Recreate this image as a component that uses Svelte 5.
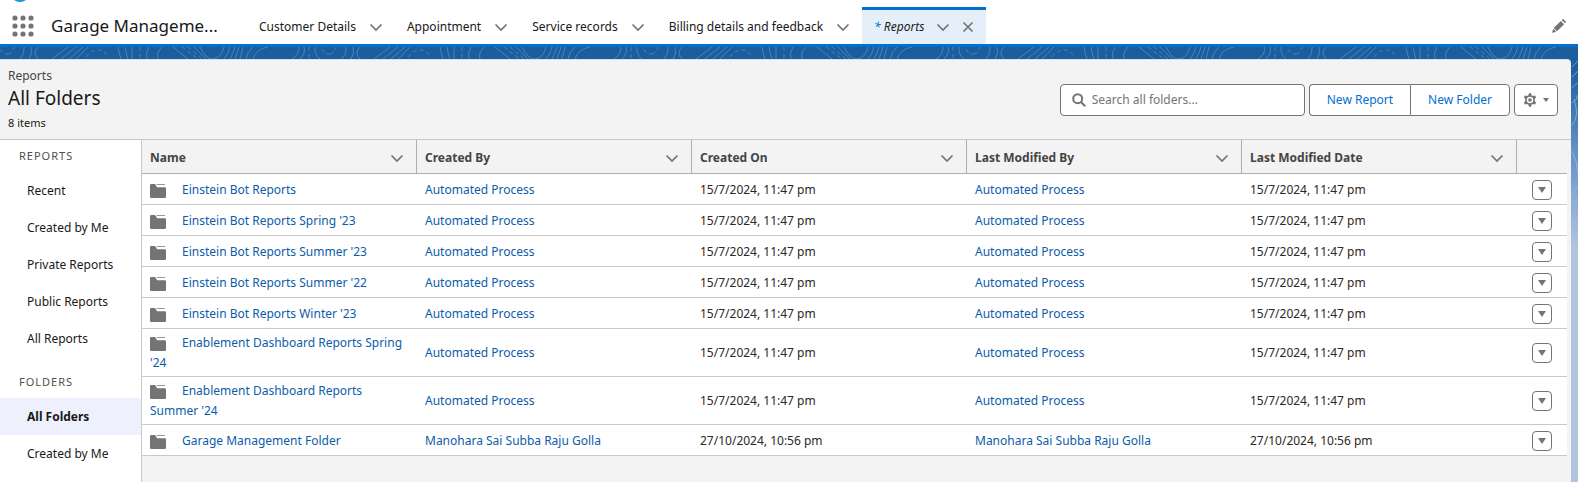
<script>
  const navItems = ['Customer Details', 'Appointment', 'Service records', 'Billing details and feedback'];
  const reportViews = ['Recent', 'Created by Me', 'Private Reports', 'Public Reports', 'All Reports'];
  const folderViews = ['All Folders', 'Created by Me'];
  const columns = ['Name', 'Created By', 'Created On', 'Last Modified By', 'Last Modified Date'];
  const rows = [
    "Einstein Bot Reports",
    "Einstein Bot Reports Spring '23",
    "Einstein Bot Reports Summer '23",
    "Einstein Bot Reports Summer '22",
    "Einstein Bot Reports Winter '23",
    "Enablement Dashboard Reports Spring '24",
    "Enablement Dashboard Reports Summer '24"
  ].map((name) => ({ name, by: 'Automated Process', on: '15/7/2024, 11:47 pm' }));
  rows.push({ name: 'Garage Management Folder', by: 'Manohara Sai Subba Raju Golla', on: '27/10/2024, 10:56 pm' });
  const dots = [3, 11, 19];
</script>

{#snippet chevron()}
  <svg class="chevron" width="14" height="14" viewBox="0 0 14 14" aria-hidden="true"><path d="M1.500 4.500 7 10l5.500-5.500" /></svg>
{/snippet}

<div class="app">
  <svg class="logo" width="20" height="2" viewBox="0 0 20 2" aria-hidden="true"><path d="M4 0h12q-2.500 2-6 2T4 0z" /></svg>
  <nav class="nav">
    <button class="launcher" aria-label="App Launcher">
      <svg width="22" height="22" viewBox="0 0 22 22" aria-hidden="true">
        {#each dots as y}{#each dots as x}<circle cx={x} cy={y} r="2.600" />{/each}{/each}
      </svg>
    </button>
    <span class="app-name">Garage Manageme...</span>
    {#each navItems as item}
      <div class="nav-item">
        <a href="#nav">{item}</a>
        <button class="bare" aria-label="{item} list">{@render chevron()}</button>
      </div>
    {/each}
    <div class="nav-item active">
      <a href="#reports"><span class="star">*</span> Reports</a>
      <button class="bare" aria-label="Reports list">{@render chevron()}</button>
      <button class="bare" aria-label="Close Reports">
        <svg class="close" width="12" height="12" viewBox="0 0 12 12" aria-hidden="true"><path d="M1.500 1.500l9 9M10.500 1.500l-9 9" /></svg>
      </button>
    </div>
    <button class="bare edit" aria-label="Edit navigation">
      <svg width="14" height="14" viewBox="0 0 14 14" aria-hidden="true"><path d="M8.800 1.900 12.100 5.200 5 12.300 1.700 9zM9.700 1l.7-.7q.5-.5 1.100 0l2.200 2.200q.5.600 0 1.100l-.7.700zM1.200 9.700l3.100 3.100-3.500 1q-.7.100-.6-.6z" /></svg>
    </button>
  </nav>

  <div class="stage">
    <svg class="contours" aria-hidden="true">
      <defs>
        <pattern id="topo" x="8" width="322" height="12" patternUnits="userSpaceOnUse">
          <path d="M12 12q5-5 4-12M21 12q4-6 2-12M30 12q-6-6 0-12M44 12l16-12M53 12l15-12M61 12l14-12M68 12l12-12M110 0q1 6 3 12M117 0q1 6 3 12M124 0v12M141 0q-4 6-2 12M154 0q-6 6-4 12M165 0l15 12M186 0l12 12M192 0q6 12 12 12 9 0 12-12M222 0q-2 8-6 12M227 0q-2 7-5 12M231 0l-4 12M235 0l-3 12M245 0q-6 5-7 12M260 0q-12 2-15 12M284 12q7-4 7-12M292 12q6-6 4-12M307 0q-1 7 5 12" />
          <path d="M78 10q4-6 11-7t12 8M132 0v12M174 0l16 12M180 0l14 12M301 0v12M314 2q3 6 8 5M0 7q5-1 6-7" stroke-dasharray="4 3" />
        </pattern>
      </defs>
      <rect width="100%" height="12" fill="url(#topo)" />
    </svg>
    <svg class="contours edge" width="6" height="190" viewBox="0 0 6 190" aria-hidden="true">
      <path d="M0 8l6-6M0 18l6-6M0 29q3-4 6-5M0 44q5-3 6-8M0 66q8-8 2-26M0 92q5 10 6 22M6 128q-4 2-6 8M6 140l-6 6M0 162h6" />
    </svg>
    <main class="panel">
      <header class="head">
        <div class="titles">
          <p class="eyebrow">Reports</p>
          <h1>All Folders</h1>
          <p class="count">8 items</p>
        </div>
        <div class="actions">
          <label class="search">
            <svg width="14" height="14" viewBox="0 0 14 14" aria-hidden="true"><circle cx="5.700" cy="5.700" r="4.500" /><path d="M9 9l4.200 4.200" /></svg>
            <input type="search" aria-label="Search all folders" placeholder="Search all folders..." />
          </label>
          <div class="group">
            <button>New Report</button>
            <button>New Folder</button>
          </div>
          <button class="gear" aria-label="List settings">
            <svg width="14" height="14" viewBox="0 0 14 14" aria-hidden="true"><path d="M6 .3h2l.6 2 1.300.7 2.100-.6 1.100 1.900L11.700 6v1.900l1.400 1.600-1.100 1.900-2.100-.5-1.300.8-.6 2H6l-.6-2-1.300-.8-2.100.5-1.100-1.900 1.400-1.600V6L.9 4.300 2 2.400l2.100.6 1.300-.7zM7 3.800a3.200 3.200 0 1 0 0 6.400 3.200 3.200 0 1 0 0-6.400zM7 5.200a1.800 1.800 0 1 1 0 3.600 1.800 1.800 0 1 1 0-3.600z" fill-rule="evenodd" /></svg>
            <svg width="6" height="4" viewBox="0 0 6 4" aria-hidden="true"><path d="M0 0h6L3 4z" /></svg>
          </button>
        </div>
      </header>
      <div class="body">
        <aside class="side">
          <section>
            <h2>REPORTS</h2>
            {#each reportViews as v}<a href="#view">{v}</a>{/each}
          </section>
          <section>
            <h2>FOLDERS</h2>
            {#each folderViews as v, i}<a href="#folder" class:selected={i === 0}>{v}</a>{/each}
          </section>
        </aside>
        <div class="content">
          <table>
            <colgroup>
              {#each columns as c}<col />{/each}
              <col class="menu-col" />
            </colgroup>
            <thead>
              <tr>
                {#each columns as c}
                  <th><div class="th"><span>{c}</span><button class="bare" aria-label="{c} actions">{@render chevron()}</button></div></th>
                {/each}
                <th aria-label="Actions"></th>
              </tr>
            </thead>
            <tbody>
              {#each rows as r}
                <tr>
                  <td>
                    <svg class="folder" width="16" height="14" viewBox="0 0 16 14" aria-hidden="true"><path d="M0 1.200Q0 0 1.200 0h3.300Q5.300 0 5.700.8L7 3.200h7.800Q16 3.200 16 4.400v8.300q0 1.300-1.300 1.300H1.300Q0 14 0 12.700zM6.500.2h8q.6 0 .7.800H7z" /></svg><a href="#folder">{r.name}</a>
                  </td>
                  <td><a href="#user">{r.by}</a></td>
                  <td>{r.on}</td>
                  <td><a href="#user">{r.by}</a></td>
                  <td>{r.on}</td>
                  <td class="menu">
                    <button aria-label="Actions for {r.name}"><svg width="8" height="6" viewBox="0 0 8 6" aria-hidden="true"><path d="M0 0h8L4 6z" /></svg></button>
                  </td>
                </tr>
              {/each}
            </tbody>
          </table>
        </div>
      </div>
    </main>
  </div>
</div>

<style>
  :global(body) { overflow: hidden; }
  .app {
    font: 12px/20px "Noto Sans", "Open Sans", sans-serif;
    color: #181818;
    background: #fff;
    height: 100vh;
    display: flex;
    flex-direction: column;
  }
  .app * { box-sizing: border-box; }
  button { font: inherit; color: inherit; cursor: pointer; padding: 0; }
  a { color: inherit; text-decoration: none; }
  h1, h2, p { margin: 0; font-weight: 400; }
  svg { display: block; fill: #747474; flex: none; }
  .bare, .launcher { border: 0; background: none; display: flex; }
  .chevron, .close { fill: none; stroke: #747474; stroke-width: 1.700; }
  .logo { margin-left: 10px; fill: #0d9dda; }
  .nav {
    height: 45px;
    flex: none;
    display: flex;
    align-items: stretch;
    border-bottom: 3px solid #0070d2;
    padding: 5px 12px 0;
  }
  .launcher { align-self: center; }
  .app-name { font-size: 17px; align-self: center; margin: 0 31px 0 17px; width: 165px; white-space: nowrap; }
  .nav-item { display: flex; align-items: center; gap: 13px; padding: 0 12px; white-space: nowrap; border-top: 3px solid transparent; }
  .active { background: #e5effa; border-color: #0070d2; font-style: italic; gap: 12px; }
  .star { color: #0070d2; }
  .edit { margin-left: auto; align-self: center; }
  .stage {
    flex: 1;
    min-height: 0;
    position: relative;
    padding: 12px 7px 0 0;
    background: linear-gradient(#1b5c9d 0, #1b5f9f 20px, #5f8fc4 100px, #b0c4df 200px);
    display: flex;
  }
  .contours { position: absolute; top: 0; left: 0; width: 100%; height: 12px; }
  .contours path { fill: none; stroke: #4a82b8; stroke-width: 1; }
  .edge { top: 12px; left: auto; right: 0; width: 6px; height: 190px; opacity: 0.600; }
  .edge path { stroke: #a9c6e6; }
  .panel { flex: 1; background: #f3f3f3; border-top: 1px solid #d8dde6; border-top-right-radius: 4px; display: flex; flex-direction: column; min-width: 0; }
  .head { display: flex; justify-content: space-between; align-items: flex-start; height: 80px; padding: 6px 13px 0 8px; border-bottom: 1px solid #c9c9c9; }
  h1 { font-size: 19px; line-height: 24px; }
  .eyebrow { color: #444; }
  .count { font-size: 11px; line-height: 26px; }
  .actions { display: flex; gap: 4px; padding-top: 18px; }
  .search { display: flex; align-items: center; gap: 6px; width: 245px; height: 32px; padding: 0 11px; border: 1px solid #747474; border-radius: 4px; background: #fff; }
  .search svg { fill: none; stroke: #747474; stroke-width: 2; }
  .search input { border: 0; outline: 0; padding: 0; flex: 1; min-width: 0; font: inherit; background: none; }
  .search input::placeholder { color: #747474; opacity: 1; }
  .group { display: flex; }
  .group button, .gear { height: 32px; border: 1px solid #747474; background: #fff; color: #0070d2; padding: 0 17px; border-radius: 4px; }
  .group button:first-child { border-radius: 4px 0 0 4px; border-right: 0; }
  .group button:last-child { border-radius: 0 4px 4px 0; }
  .group + .gear { display: flex; align-items: center; gap: 6px; padding: 0 8px; }
  .body { flex: 1; display: flex; min-height: 0; }
  .side { width: 142px; flex: none; background: #fff; border-right: 1px solid #c9c9c9; display: flex; flex-direction: column; gap: 9px; }
  .side h2 { font-size: 11px; line-height: 18px; letter-spacing: 1px; color: #514f4d; padding: 7px 19px; }
  .side a { display: block; line-height: 37px; height: 37px; padding-left: 27px; }
  .side .selected { background: #eef1fd; font-weight: 700; }
  .content { flex: 1; padding-right: 4px; min-width: 0; }
  table { width: 100%; table-layout: fixed; border-collapse: separate; border-spacing: 0; }
  .menu-col { width: 50px; }
  th { height: 34px; padding: 0; color: #444; text-align: left; border-bottom: 1px solid #aeaeae; }
  .th { height: 33px; display: flex; align-items: center; justify-content: space-between; padding: 2px 12px 0 8px; border-right: 1px solid #aeaeae; }
  td { height: 31px; background: #fff; padding: 4px 8px 3px; border-bottom: 1px solid #c9c9c9; color: #2b2826; }
  td a { color: #0b5cab; }
  .folder { display: inline-block; vertical-align: -4px; margin-right: 16px; }
  .menu { padding: 5px 15px 4px; }
  .menu button { width: 20px; height: 20px; border: 1px solid #747474; border-radius: 4px; background: #fff; display: flex; align-items: center; justify-content: center; }
</style>
